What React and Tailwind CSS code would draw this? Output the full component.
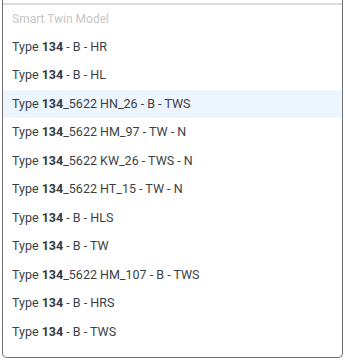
export default function App() {
  const items = [
    ["B - HR", null],
    ["B - HL", null],
    ["_5622 HN_26 - B - TWS", true],
    ["_5622 HM_97 - TW - N", null],
    ["_5622 KW_26 - TWS - N", null],
    ["_5622 HT_15 - TW - N", null],
    ["B - HLS", null],
    ["B - TW", null],
    ["_5622 HM_107 - B - TWS", null],
    ["B - HRS", null],
    ["B - TWS", null],
  ];
  return (
    <div className="w-[345px] h-[362px] bg-white" style={{ fontFamily: "Roboto, 'Noto Sans', sans-serif" }}>
      <div className="ml-[2px] w-[341px] h-[358px] border-x border-b border-[#6e6e6e] rounded-b-[5px] pt-[3px] overflow-hidden">
        <div className="h-[2px] bg-[#dcdcdc]" />
        <div className="h-[27.75px] flex items-center pl-[9px] text-[12px] text-[#c6c6c6]">Smart Twin Model</div>
        {items.map(([rest, hl], i) => {
          const sep = rest.startsWith("_") ? "" : " - ";
          return (
            <div
              key={i}
              className={`h-[28.5px] flex items-center pl-[9px] text-[12.5px] text-[#3a3f45] ${hl ? "bg-[#edf5fe]" : ""}`}
            >
              <span className="whitespace-pre">
                Type <b className="font-bold text-[#333a42]">134</b>
                {sep}
                {rest}
              </span>
            </div>
          );
        })}
      </div>
    </div>
  );
}
